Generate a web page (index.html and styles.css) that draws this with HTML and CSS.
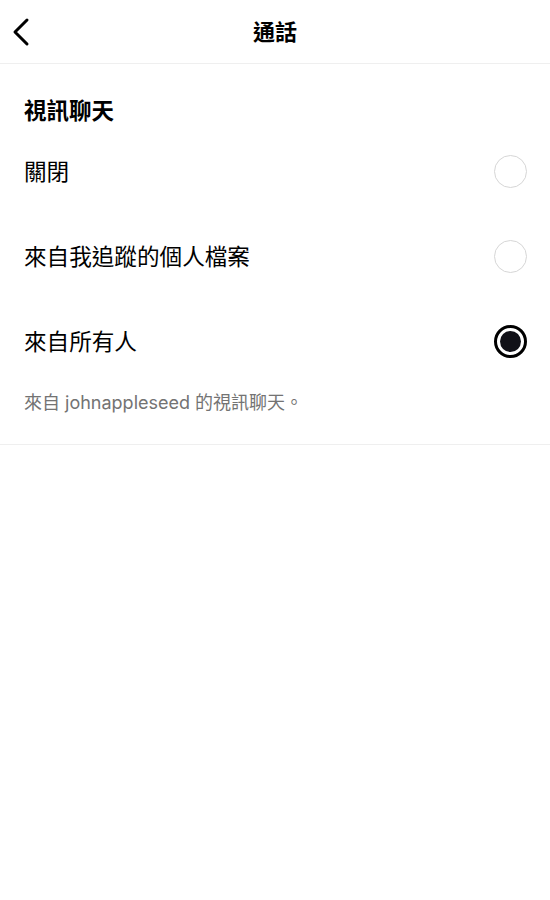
FILE: index.html
```html
<!DOCTYPE html>
<html lang="zh-Hant">
<head>
<meta charset="utf-8">
<link rel="stylesheet" href="styles.css">
</head>
<body>
<header class="topbar">
  <button class="back" aria-label="返回">
    <svg width="20" height="30" viewBox="0 0 20 30"><path d="M16 3 L4 15 L16 27" fill="none" stroke="#000" stroke-width="3" stroke-linecap="round" stroke-linejoin="round"/></svg>
  </button>
  <h1 class="title">通話</h1>
</header>
<section class="section">
  <h2 class="section-title">視訊聊天</h2>
  <div class="row"><span class="label">關閉</span><span class="radio"></span></div>
  <div class="row"><span class="label">來自我追蹤的個人檔案</span><span class="radio"></span></div>
  <div class="row"><span class="label">來自所有人</span><span class="radio selected"></span></div>
  <p class="note">來自 johnappleseed 的視訊聊天。</p>
</section>
</body>
</html>
```
FILE: styles.css
```css
* { box-sizing: border-box; }
body {
  margin: 0;
  background: #fff;
  font-family: "Noto Sans CJK TC", "Noto Sans", sans-serif;
  color: #000;
}
.topbar {
  height: 64px;
  display: flex;
  align-items: center;
  justify-content: center;
  position: relative;
  padding-bottom: 4px;
  border-bottom: 1px solid #efefef;
}
.back {
  position: absolute;
  left: 11px;
  top: 17px;
  width: 24px;
  height: 30px;
  padding: 0;
  border: 0;
  background: none;
  display: flex;
}
.title {
  margin: 0;
  font-size: 22px;
  font-weight: 700;
  line-height: 30px;
}
.section {
  padding: 26px 0 29px;
  border-bottom: 1px solid #efefef;
}
.section-title {
  margin: 0;
  padding: 0 24px;
  font-size: 22.5px;
  font-weight: 700;
  line-height: 39px;
}
.row {
  height: 85px;
  display: flex;
  align-items: center;
  justify-content: space-between;
  padding: 0 23px 0 24px;
}
.label {
  font-size: 22.6px;
  line-height: 30px;
  position: relative;
  top: -1px;
}
.radio {
  width: 33px;
  height: 33px;
  border-radius: 50%;
  border: 1.5px solid #d6d6d6;
}
.radio.selected {
  border: 3px solid #000;
  display: flex;
  align-items: center;
  justify-content: center;
}
.radio.selected::after {
  content: "";
  width: 21px;
  height: 21px;
  border-radius: 50%;
  background: #111118;
}
.note {
  margin: 7px 0 0;
  padding: 0 24px;
  font-family: Inter, "Noto Sans CJK TC", sans-serif;
  font-size: 18px;
  line-height: 24px;
  color: #737373;
}
```
